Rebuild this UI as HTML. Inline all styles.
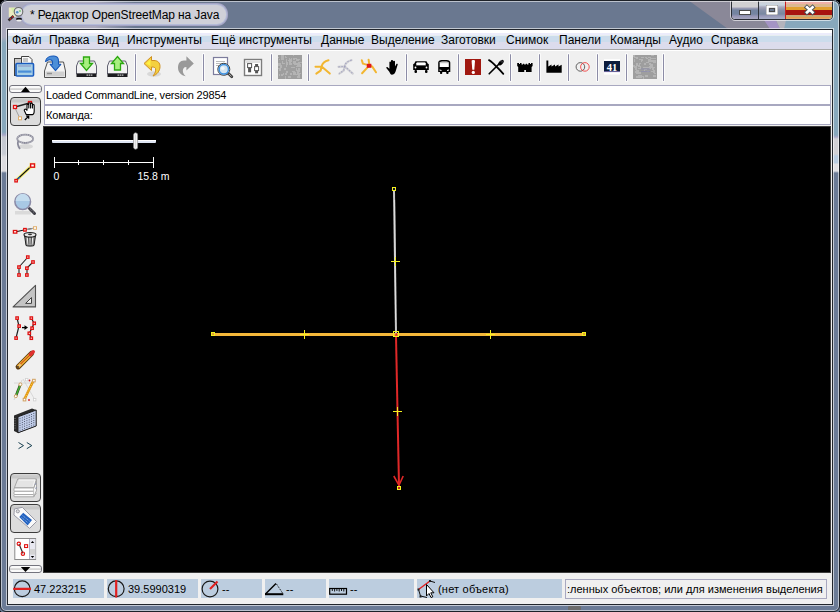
<!DOCTYPE html>
<html><head><meta charset="utf-8">
<style>
*{box-sizing:border-box}
html,body{margin:0;padding:0;width:840px;height:612px;overflow:hidden;background:#000}
body{position:relative;font-family:"Liberation Sans",sans-serif;font-size:12px;color:#000}
.a{position:absolute}
#win{left:0;top:0;width:840px;height:612px;border-radius:7px 7px 3px 3px;background:#6b7b96;overflow:hidden}
.t{position:absolute;white-space:pre;line-height:14px}
.sep{position:absolute;top:54px;width:2px;height:27px;background:#9a9ab0;border-right:1px solid #fff}
.menu span{position:absolute;top:33px;white-space:pre;line-height:14px}
</style></head><body>
<div id="win" class="a">
  <!-- title bar background -->
  <div class="a" style="left:0;top:0;width:840px;height:29px;background:linear-gradient(90deg,#aaaabd 0,#aaaabd 95px,#6a7890 135px,#6a7890 680px,#6a7890 100%)"></div>
  <!-- title streaks right -->
  <svg class="a" style="left:0;top:0" width="840" height="612">
    <polygon points="688,0 840,0 840,29 728,29" fill="#8a8898"/>
    <polygon points="764,20 776,20 780,29 770,29" fill="#a494c4"/>
    <polygon points="776,20 786,20 786,29 780,29" fill="#b4b4bc"/>
    <polygon points="786,20 840,20 840,29 784,29" fill="#88a8bc"/>
    <polygon points="820,0 840,0 840,29 820,29" fill="#88a8bc"/>
  </svg>
  <!-- left frame -->
  <div class="a" style="left:0;top:29px;width:8px;height:583px;background:linear-gradient(180deg,#aaaabd 0,#aaaabd 8px,#88a8bc 14px,#88a8bc 103px,#a8a8c8 106px,#c4c8d0 108px,#c8ccd4 125px,#dcdce0 128px,#dcdce0 142px,#6b7b96 144px,#6b7b96 100%)"></div>
  <!-- right frame -->
  <div class="a" style="left:832px;top:19px;width:8px;height:593px;background:linear-gradient(180deg,#88a8bc 0,#88a8bc 116px,#a8a8c8 118px,#d0d0d4 120px,#d0d0d4 135px,#b8cce0 137px,#b8cce0 144px,#e0e0e4 145px,#e0e0e4 152px,#6b7b96 154px,#6b7b96 100%)"></div>
  <!-- title glow -->
  <div class="a" style="left:22px;top:5px;width:204px;height:19px;border-radius:9px;background:#cfd0d8;box-shadow:0 0 0 1px #b4bcd8,0 0 0 2px #a4a4c4"></div>
  <div class="t" style="left:30px;top:8px;font-size:12px;color:#000;letter-spacing:-0.12px">* Редактор OpenStreetMap на Java</div>

  <!-- title icon -->
  <svg class="a" style="left:4px;top:4px" width="24" height="24">
    <rect x="4.8" y="3.5" width="7" height="9.5" fill="#ecebc0"/>
    <path d="M7 4 L11 4 L9 9 Z" fill="#d0f0a0" opacity=".8"/>
    <circle cx="14.5" cy="7.8" r="4.3" fill="#e0e4e4" stroke="#6a6a6a" stroke-width="1.1"/>
    <circle cx="13.2" cy="8.2" r="1.3" fill="#5090c8"/><circle cx="16" cy="7" r="1" fill="#80d080"/>
    <path d="M4.5 16.5 L9.5 12" stroke="#303030" stroke-width="2.4"/>
    <circle cx="6.5" cy="14.8" r=".9" fill="#d02020"/><circle cx="8.6" cy="12.8" r=".9" fill="#d02020"/>
    <ellipse cx="15" cy="15" rx="3" ry="1.2" fill="#101010"/>
    <ellipse cx="15" cy="16.6" rx="2.6" ry="1" fill="#f0f0f0"/>
  </svg>
  <!-- caption buttons -->
  <div class="a" style="left:730px;top:-2px;width:104px;height:23px;border:1px solid rgba(255,255,255,.6);border-radius:0 0 5px 5px"></div>
  <div class="a" style="left:731px;top:-1px;width:102px;height:21px;border:1px solid #2a2e36;border-radius:0 0 4px 4px;overflow:hidden;background:#fff">
    <div class="a" style="left:0;top:1px;width:26px;height:18px;border-radius:0 0 0 3px;background:linear-gradient(180deg,#d0d0d2 0,#d0d0d2 6px,#a0a0b8 7px,#7484a0 9px,#7484a0 13px,#9494b4 15px,#a8a8c0 100%)"></div>
    <div class="a" style="left:26px;top:0;width:1px;height:20px;background:#30343c"></div>
    <div class="a" style="left:27px;top:1px;width:26px;height:18px;background:linear-gradient(180deg,#d0d0d4 0,#c8d4e0 4px,#a8a8bc 6px,#8890a8 9px,#7888a0 13px,#9898b8 15px,#a8b0c8 100%)"></div>
    <div class="a" style="left:53px;top:0;width:1px;height:20px;background:#c82020"></div>
    <div class="a" style="left:54px;top:1px;width:46px;height:18px;border-radius:0 0 3px 0;background:linear-gradient(180deg,#f4e8e8 0,#f4e8e8 1px,#f0b0a8 1px,#f0b0a8 3px,#dcb890 3px,#dcb890 6px,#e2a030 6px,#e2a030 9px,#a81410 9px,#a81410 14px,#c8a878 14px,#c8a878 16px,#e0a040 16px,#e8a878 100%)"></div>
  </div>
  <svg class="a" style="left:730px;top:0" width="110" height="24">
    <rect x="9.5" y="10.5" width="11" height="4" fill="#fff" stroke="#4a4a4a"/>
    <rect x="36.5" y="5.5" width="11" height="9" fill="none" stroke="#4a4a4a"/>
    <rect x="37.5" y="6.5" width="9" height="7" fill="none" stroke="#fff" stroke-width="2.4"/>
    <rect x="39.5" y="8.5" width="5" height="3" fill="#6a7890" stroke="#4a4a4a"/>
    <path d="M77 7.3 L82.5 12.4 M82.5 7.3 L77 12.4" stroke="#4a5058" stroke-width="4.4" stroke-linecap="square"/>
    <path d="M77 7.3 L82.5 12.4 M82.5 7.3 L77 12.4" stroke="#fff" stroke-width="2.6" stroke-linecap="square"/>
  </svg>
  <!-- outer borders -->
  <div class="a" style="left:0;top:0;width:840px;height:612px;border:1px solid #1e2228;border-radius:7px 7px 6px 6px;box-shadow:inset 0 0 0 1px rgba(255,255,255,.55)"></div>
  <!-- content border -->
  <div class="a" style="left:6px;top:28px;width:828px;height:578px;border:1px solid rgba(255,255,255,.6)"></div>
  <div class="a" style="left:7px;top:29px;width:826px;height:576px;border:1px solid #22262c;background:#f0f0f0"></div>
  <!-- menu bar -->
  <div class="a" style="left:8px;top:30px;width:824px;height:21px;background:linear-gradient(180deg,#fff 0,#fff 3px,#ececfb 3px,#ececfb 5px,#e6eef0 5px,#e6eef0 6px,#ccdcec 6px,#ccdcec 12px,#dcdcec 12px,#dcdcec 19px,#a8a8a8 19px,#a8a8a8 20px,#fff 20px)"></div>
  <div class="menu">
    <span style="left:12px">Файл</span>
    <span style="left:49px">Правка</span>
    <span style="left:97px">Вид</span>
    <span style="left:127px">Инструменты</span>
    <span style="left:211px">Ещё инструменты</span>
    <span style="left:321px">Данные</span>
    <span style="left:371px">Выделение</span>
    <span style="left:441px">Заготовки</span>
    <span style="left:506px">Снимок</span>
    <span style="left:559px">Панели</span>
    <span style="left:610px">Команды</span>
    <span style="left:669px">Аудио</span>
    <span style="left:711px">Справка</span>
  </div>

  <!-- toolbar separators -->
  <div class="a" style="left:135px;top:54px;width:1px;height:27px;background:#8c8ca6;border-radius:1px;box-shadow:0 0 0 1px rgba(255,255,255,.7)"></div><div class="a" style="left:203px;top:54px;width:1px;height:27px;background:#8c8ca6;border-radius:1px;box-shadow:0 0 0 1px rgba(255,255,255,.7)"></div><div class="a" style="left:271px;top:54px;width:1px;height:27px;background:#8c8ca6;border-radius:1px;box-shadow:0 0 0 1px rgba(255,255,255,.7)"></div><div class="a" style="left:308px;top:54px;width:1px;height:27px;background:#8c8ca6;border-radius:1px;box-shadow:0 0 0 1px rgba(255,255,255,.7)"></div><div class="a" style="left:406px;top:54px;width:1px;height:27px;background:#8c8ca6;border-radius:1px;box-shadow:0 0 0 1px rgba(255,255,255,.7)"></div><div class="a" style="left:458px;top:54px;width:1px;height:27px;background:#8c8ca6;border-radius:1px;box-shadow:0 0 0 1px rgba(255,255,255,.7)"></div><div class="a" style="left:510px;top:54px;width:1px;height:27px;background:#8c8ca6;border-radius:1px;box-shadow:0 0 0 1px rgba(255,255,255,.7)"></div><div class="a" style="left:539px;top:54px;width:1px;height:27px;background:#8c8ca6;border-radius:1px;box-shadow:0 0 0 1px rgba(255,255,255,.7)"></div><div class="a" style="left:568px;top:54px;width:1px;height:27px;background:#8c8ca6;border-radius:1px;box-shadow:0 0 0 1px rgba(255,255,255,.7)"></div><div class="a" style="left:597px;top:54px;width:1px;height:27px;background:#8c8ca6;border-radius:1px;box-shadow:0 0 0 1px rgba(255,255,255,.7)"></div><div class="a" style="left:626px;top:54px;width:1px;height:27px;background:#8c8ca6;border-radius:1px;box-shadow:0 0 0 1px rgba(255,255,255,.7)"></div><div class="a" style="left:663px;top:54px;width:1px;height:27px;background:#8c8ca6;border-radius:1px;box-shadow:0 0 0 1px rgba(255,255,255,.7)"></div>
  <svg class="a" style="left:0;top:0" width="840" height="90">
    <!-- open -->
    <rect x="14.5" y="58.5" width="8" height="17" fill="#c8c8c8" stroke="#404040"/>
    <path d="M21.5 56.5 H29 L32 59.5 V64 H21.5 Z" fill="#fafafa" stroke="#404040"/>
    <path d="M23 59h5M23 61h5" stroke="#909090"/>
    <rect x="16" y="63.5" width="17.5" height="12.5" rx="1" fill="#a8d0e6" stroke="#1a5cc0" stroke-width="1.6"/>
    <rect x="18" y="70.5" width="13.5" height="2.2" fill="#4a8ed8"/>
    <path d="M18 66h13" stroke="#8080b8" stroke-width=".8"/>
    <!-- download from location -->
    <path d="M47.5 62 H63.5 L65.5 71 V77.5 H44.5 V71 Z" fill="#f4f4f4" stroke="#505050"/>
    <rect x="45.5" y="71.5" width="19" height="5" fill="#d0d0d0"/>
    <path d="M47 73.5h5" stroke="#909090" stroke-width="1.5"/>
    <path d="M45.5 61.5 C46 57.5 50 55.8 54 56 C57 56.2 58.5 58.5 58.5 61 V64.3 H60.8 L55.5 70.6 L50.2 64.3 H52.5 V62 C52.5 60.5 51 59.5 49.5 59.8 C48 60.1 46.8 61 45.5 61.5 Z" fill="#4c8ed8" stroke="#1858b8" stroke-width="1.1" stroke-linejoin="round"/>
    <!-- download green -->
    <path d="M78.5 61 H94.5 L96.5 66 V74 H76.5 V66 Z" fill="#f2f2f2" stroke="#606070"/>
    <rect x="76.5" y="73.5" width="20" height="3.5" fill="#1c1c20"/>
    <path d="M86.5 75.2h6.5" stroke="#c0c0c0" stroke-width="1.2" stroke-dasharray="1.5 .6"/>
    <path d="M83.5 57 H89.5 V63.5 H92.5 L86.5 70.5 L80.5 63.5 H83.5 Z" fill="#a8f080" stroke="#2ca810" stroke-width="1.3"/>
    <!-- upload green -->
    <path d="M109.5 61 H125.5 L127.5 66 V74 H107.5 V66 Z" fill="#f2f2f2" stroke="#606070"/>
    <rect x="107.5" y="73.5" width="20" height="3.5" fill="#1c1c20"/>
    <path d="M117.5 75.2h6.5" stroke="#c0c0c0" stroke-width="1.2" stroke-dasharray="1.5 .6"/>
    <path d="M114.5 70 H120.5 V63.5 H123.5 L117.5 56.5 L111.5 63.5 H114.5 Z" fill="#a8f080" stroke="#2ca810" stroke-width="1.3"/>
    <!-- undo -->
    <ellipse cx="154" cy="74" rx="7" ry="2.8" fill="#d8d8d8"/>
    <path d="M144 63.5 L151.5 56.5 V60.5 H154 C158 60.5 160 63 160 66.5 C160 71 157 74.5 153 76 C155.5 73 156 70.5 155.5 68.5 C155 67.5 154 67 152 67 H151.5 V70.6 Z" fill="#f4d040" stroke="#d09020" stroke-width="1"/>
    <path d="M146 63.5 L150.5 59.5 V66 Z" fill="#fff040"/>
    <!-- redo -->
    <path d="M193.8 63.5 L186.4 56.2 V60.5 H184 C180 60.5 178 63.5 178 67.5 C178 72 181 75.5 185.7 76.3 C183 74 182.5 71.5 183 69.5 C183.5 67.8 184.5 67 186 67 H186.4 V70.6 Z" fill="#999"/>
    <!-- zoom to -->
    <rect x="213.5" y="57.5" width="14" height="17" fill="#fff" stroke="#7c7c9c" stroke-width="1.2"/>
    <path d="M216 61.5h9M216 63.5h9M216 65.5h4" stroke="#a8a8a8" stroke-width=".8"/>
    <path d="M228.5 73.5 L231.8 76.8" stroke="#404040" stroke-width="2.8" stroke-linecap="round"/><path d="M229 74 L231.5 76.5" stroke="#c0c0c0" stroke-width=".8"/>
    <circle cx="223.8" cy="69.3" r="6" fill="#d4e4f0" stroke="#404040" stroke-width="1"/>
    <circle cx="223.8" cy="69.3" r="4.7" fill="none" stroke="#3c90e0" stroke-width="1.5"/><circle cx="222.8" cy="68.3" r="1.8" fill="#f0f6fa"/>
    <!-- toggle switches -->
    <rect x="244.5" y="59.5" width="17" height="16" fill="#fff" stroke="#7c7c7c" stroke-width="1.4"/>
    <rect x="246" y="61" width="14" height="2" fill="#e0e0e0"/>
    <rect x="247.6" y="63.6" width="4" height="4" fill="#fff" stroke="#555" stroke-width="1"/>
    <rect x="248.1" y="68" width="3" height="4.3" fill="#555"/>
    <rect x="255.1" y="64" width="3" height="2.5" fill="#555"/>
    <rect x="254.6" y="66.6" width="4" height="4" fill="#fff" stroke="#555" stroke-width="1"/>
    <rect x="255.1" y="71" width="3" height="2.3" fill="#555"/>
    <!-- noise 1 -->
    <rect x="278" y="55" width="24" height="24" fill="#9e9e9e"/><rect x="285" y="73" width="2" height="2" fill="#b4b4b4"/><rect x="297" y="70" width="1" height="1" fill="#b4b4b4"/><rect x="293" y="63" width="2" height="1" fill="#b4b4b4"/><rect x="293" y="72" width="3" height="3" fill="#b4b4b4"/><rect x="298" y="59" width="2" height="1" fill="#b4b4b4"/><rect x="294" y="67" width="1" height="1" fill="#b4b4b4"/><rect x="283" y="73" width="1" height="2" fill="#b4b4b4"/><rect x="278" y="63" width="3" height="3" fill="#b4b4b4"/><rect x="291" y="67" width="3" height="1" fill="#b4b4b4"/><rect x="289" y="58" width="1" height="1" fill="#b4b4b4"/><rect x="293" y="61" width="2" height="3" fill="#b4b4b4"/><rect x="298" y="64" width="3" height="3" fill="#b4b4b4"/><rect x="296" y="66" width="3" height="1" fill="#b4b4b4"/><rect x="288" y="76" width="1" height="2" fill="#b4b4b4"/><rect x="297" y="76" width="2" height="2" fill="#b4b4b4"/><rect x="295" y="73" width="1" height="1" fill="#b4b4b4"/><rect x="298" y="73" width="2" height="2" fill="#b4b4b4"/><rect x="281" y="57" width="3" height="3" fill="#b4b4b4"/><rect x="280" y="66" width="1" height="3" fill="#b4b4b4"/><rect x="282" y="55" width="2" height="3" fill="#b4b4b4"/><rect x="291" y="58" width="1" height="1" fill="#b4b4b4"/><rect x="290" y="73" width="2" height="2" fill="#b4b4b4"/><rect x="294" y="62" width="1" height="2" fill="#b4b4b4"/><rect x="278" y="57" width="1" height="1" fill="#b4b4b4"/><rect x="284" y="68" width="2" height="2" fill="#b4b4b4"/><rect x="282" y="56" width="2" height="2" fill="#b4b4b4"/><rect x="289" y="59" width="3" height="3" fill="#b4b4b4"/><rect x="292" y="71" width="3" height="1" fill="#b4b4b4"/><rect x="297" y="71" width="2" height="3" fill="#b4b4b4"/><rect x="298" y="62" width="2" height="3" fill="#b4b4b4"/><rect x="286" y="71" width="2" height="2" fill="#b4b4b4"/><rect x="278" y="68" width="2" height="1" fill="#b4b4b4"/><rect x="290" y="74" width="2" height="1" fill="#b4b4b4"/><rect x="298" y="75" width="2" height="3" fill="#b4b4b4"/><rect x="289" y="76" width="2" height="2" fill="#b4b4b4"/><rect x="293" y="55" width="1" height="1" fill="#b4b4b4"/><rect x="289" y="63" width="3" height="2" fill="#b4b4b4"/><rect x="296" y="74" width="2" height="1" fill="#b4b4b4"/><rect x="289" y="60" width="2" height="2" fill="#b4b4b4"/><rect x="297" y="63" width="2" height="3" fill="#b4b4b4"/><rect x="281" y="55" width="2" height="2" fill="#b4b4b4"/><rect x="294" y="62" width="2" height="1" fill="#b4b4b4"/><rect x="288" y="60" width="3" height="1" fill="#b4b4b4"/><rect x="281" y="74" width="2" height="2" fill="#b4b4b4"/><rect x="299" y="62" width="3" height="1" fill="#b4b4b4"/><rect x="280" y="65" width="2" height="3" fill="#b4b4b4"/><rect x="286" y="62" width="1" height="1" fill="#b4b4b4"/><rect x="294" y="61" width="2" height="1" fill="#b4b4b4"/><rect x="286" y="65" width="1" height="2" fill="#b4b4b4"/><rect x="296" y="59" width="3" height="2" fill="#b4b4b4"/><rect x="294" y="63" width="3" height="2" fill="#b4b4b4"/><rect x="298" y="68" width="2" height="3" fill="#b4b4b4"/><rect x="296" y="68" width="1" height="3" fill="#b4b4b4"/><rect x="282" y="61" width="1" height="3" fill="#b4b4b4"/><rect x="297" y="71" width="3" height="1" fill="#b4b4b4"/><rect x="279" y="69" width="2" height="2" fill="#b4b4b4"/><rect x="285" y="57" width="2" height="1" fill="#b4b4b4"/><rect x="285" y="56" width="1" height="1" fill="#b4b4b4"/><rect x="291" y="73" width="1" height="1" fill="#b4b4b4"/><rect x="293" y="58" width="2" height="2" fill="#b4b4b4"/><rect x="285" y="76" width="1" height="3" fill="#b4b4b4"/><rect x="279" y="74" width="1" height="2" fill="#b4b4b4"/><rect x="282" y="63" width="3" height="1" fill="#b4b4b4"/><rect x="289" y="62" width="2" height="1" fill="#b4b4b4"/><rect x="295" y="58" width="2" height="1" fill="#b4b4b4"/><rect x="286" y="59" width="1" height="3" fill="#b4b4b4"/><rect x="298" y="73" width="3" height="1" fill="#b4b4b4"/><rect x="286" y="62" width="2" height="3" fill="#b4b4b4"/><rect x="279" y="70" width="2" height="1" fill="#b4b4b4"/><rect x="279" y="59" width="1" height="1" fill="#b4b4b4"/>
    <!-- split way icons -->
    <g fill="none" stroke="#f2b630" stroke-width="2" stroke-linecap="round" stroke-linejoin="round">
      <path d="M328.5 60.2 C325 61 322.5 62.5 321.6 66.4 M315.5 66.8 L321.6 66.4 M321.6 66.4 L320.6 70.7 L316.3 73.6 M321.6 66.4 L329.8 73.6"/>
    </g>
    <g fill="none" stroke="#cfcfd4" stroke-width="2.2" stroke-linecap="round" stroke-linejoin="round">
      <path d="M351.5 60.2 C348 61 345.5 62.5 344.6 66.4 M338.5 66.8 L344.6 66.4 M344.6 66.4 L343.6 70.7 L339.3 73.6 M344.6 66.4 L352.8 73.6"/>
    </g>
    <g fill="none" stroke="#9898bc" stroke-width="1.2" stroke-dasharray="1.2 1.8" opacity=".8">
      <path d="M351.5 60.2 C348 61 345.5 62.5 344.6 66.4 M338.5 66.8 L344.6 66.4 M344.6 66.4 L343.6 70.7 L339.3 73.6 M344.6 66.4 L352.8 73.6"/>
    </g>
    <g fill="none" stroke="#f2b630" stroke-width="2" stroke-linecap="round" stroke-linejoin="round">
      <path d="M361.8 60.2 L362.9 63.6 L366.4 64.6 L369.4 65.4 M368.6 59.7 L369.4 65.4 M369.4 65.4 L362.1 73.3 M369.4 65.4 L372.1 66.4 L376 72.3"/>
    </g>
    <rect x="366.8" y="63.8" width="4.6" height="4" fill="#e01818"/>
    <!-- hand -->
    <path d="M389.3 71.8 L386.5 68.2 C386 67.4 386.8 66.8 387.6 67.3 L389.4 68.8 V62.3 C389.4 61.3 391 61.3 391 62.3 V66 V60.8 C391 59.7 393 59.7 393 60.8 V66 V61.5 C393 60.6 395 60.6 395 61.5 V66.5 L396.3 64.2 C396.7 63.4 398 63.8 397.7 64.6 L396.2 69.5 C395.5 72.5 394.5 74.7 392 74.7 C390.5 74.7 390 73.3 389.3 71.8 Z" fill="#000"/>
    <!-- car -->
    <path d="M415.5 61.2 H426.5 L428.8 65.6 V70 H413.2 V65.6 Z" fill="#000"/>
    <path d="M417 62.6 H425 L426.2 65.3 H415.8 Z" fill="#fff"/>
    <rect x="413.3" y="63.9" width="15.4" height="1.4" fill="#000"/>
    <rect x="416.3" y="62.8" width="9.4" height="2.4" fill="#fff"/>
    <circle cx="415.5" cy="67.5" r=".9" fill="#fff"/><circle cx="426.5" cy="67.5" r=".9" fill="#fff"/>
    <rect x="414.5" y="70" width="2.5" height="3" rx="1" fill="#000"/><rect x="425" y="70" width="2.5" height="3" rx="1" fill="#000"/>
    <!-- bus -->
    <path d="M438.2 63 C438.2 60.5 440 60.1 444.2 60.1 C448.5 60.1 450.3 60.5 450.3 63 V72 H438.2 Z" fill="#000"/>
    <path d="M439.7 62.6 C440 61.8 441 61.6 444.2 61.6 C447.4 61.6 448.5 61.8 448.8 62.6 V67 H439.7 Z" fill="#fff"/>
    <path d="M439.5 62.7 H449" stroke="#888" stroke-width=".6"/>
    <path d="M439.5 69.5 L441.5 70 V71 L439.5 70.6Z M449 69.5 L447 70 V71 L449 70.6Z" fill="#fff"/>
    <rect x="440" y="71.5" width="2.2" height="2.5" rx=".8" fill="#000"/><rect x="446.3" y="71.5" width="2.2" height="2.5" rx=".8" fill="#000"/>
    <!-- red ! -->
    <rect x="465" y="59" width="16" height="16" fill="#a01810"/>
    <path d="M471.6 61 C471.6 59.6 475 59.6 475 61 L474.3 69.8 H472.3 Z" fill="#fff"/>
    <circle cx="473.3" cy="72.4" r="1.6" fill="#fff"/>
    <!-- knife & fork -->
    <path d="M489 60.2 C490.5 60.8 496 66 503.3 73.8" stroke="#000" stroke-width="1.8" fill="none" stroke-linecap="round"/>
    <path d="M489.2 73.8 L499.5 63.5" stroke="#000" stroke-width="1.6" stroke-linecap="round"/>
    <ellipse cx="501" cy="62.6" rx="1.9" ry="3.4" transform="rotate(45 501 62.6)" fill="#000"/><path d="M500.5 61 L502.3 62.8 M501.4 60.2 L503.1 61.9" stroke="#9090a0" stroke-width=".5"/>
    <!-- castle -->
    <path d="M517.2 63 H519 V64 H520 V63 H521.5 V64.5 H523 V63.8 H524.2 V64.5 H525.8 V63.8 H527 V64.5 H528.5 V63 H530 V64 H531 V63 H532.6 V66 L531.6 67 V72 H518.2 V67 L517.2 66 Z" fill="#000"/>
    <rect x="524.3" y="70" width="1.6" height="2" fill="#fff"/>
    <!-- factory -->
    <path d="M546.4 60.5 H548.3 V66.5 L551.5 64.5 V66.5 L555 64.5 V66.5 L558.5 64.5 V66.5 L561.7 64.8 V72.8 H546.4 Z" fill="#000"/>
    <!-- circles -->
    <circle cx="580.4" cy="66.9" r="4.3" fill="none" stroke="#505050" stroke-width=".9"/>
    <circle cx="584.9" cy="66.9" r="4.3" fill="none" stroke="#f04040" stroke-width=".9"/>
    <!-- 41 -->
    <rect x="604" y="59.2" width="16" height="15.4" fill="#fff"/>
    <rect x="604" y="61" width="16" height="11" fill="#0c1c3c"/>
    <rect x="604" y="71.3" width="16" height=".8" fill="#9080c0"/>
    <text x="612" y="70.6" text-anchor="middle" font-family="Liberation Serif" font-weight="bold" font-size="10.5" fill="#fff">41</text>
    <!-- noise 2 -->
    <rect x="633" y="55" width="24" height="24" fill="#9e9e9e"/><rect x="634" y="57" width="3" height="1" fill="#b4b4b4"/><rect x="635" y="71" width="3" height="2" fill="#b4b4b4"/><rect x="638" y="65" width="1" height="2" fill="#b4b4b4"/><rect x="645" y="75" width="3" height="2" fill="#b4b4b4"/><rect x="644" y="63" width="2" height="2" fill="#b4b4b4"/><rect x="646" y="58" width="2" height="1" fill="#b4b4b4"/><rect x="645" y="57" width="2" height="1" fill="#b4b4b4"/><rect x="644" y="69" width="3" height="1" fill="#b4b4b4"/><rect x="652" y="68" width="1" height="2" fill="#b4b4b4"/><rect x="653" y="70" width="2" height="3" fill="#b4b4b4"/><rect x="646" y="69" width="1" height="1" fill="#b4b4b4"/><rect x="639" y="72" width="2" height="1" fill="#b4b4b4"/><rect x="646" y="62" width="3" height="1" fill="#b4b4b4"/><rect x="633" y="65" width="2" height="2" fill="#b4b4b4"/><rect x="636" y="69" width="1" height="3" fill="#b4b4b4"/><rect x="654" y="58" width="2" height="1" fill="#b4b4b4"/><rect x="651" y="55" width="3" height="1" fill="#b4b4b4"/><rect x="640" y="67" width="1" height="1" fill="#b4b4b4"/><rect x="651" y="58" width="3" height="1" fill="#b4b4b4"/><rect x="633" y="65" width="1" height="1" fill="#b4b4b4"/><rect x="636" y="76" width="3" height="2" fill="#b4b4b4"/><rect x="651" y="64" width="1" height="1" fill="#b4b4b4"/><rect x="651" y="71" width="2" height="1" fill="#b4b4b4"/><rect x="650" y="58" width="1" height="2" fill="#b4b4b4"/><rect x="651" y="60" width="1" height="1" fill="#b4b4b4"/><rect x="638" y="75" width="2" height="3" fill="#b4b4b4"/><rect x="652" y="67" width="2" height="2" fill="#b4b4b4"/><rect x="652" y="67" width="2" height="3" fill="#b4b4b4"/><rect x="635" y="67" width="2" height="3" fill="#b4b4b4"/><rect x="638" y="68" width="3" height="1" fill="#b4b4b4"/><rect x="653" y="67" width="2" height="1" fill="#b4b4b4"/><rect x="636" y="70" width="3" height="3" fill="#b4b4b4"/><rect x="651" y="60" width="2" height="2" fill="#b4b4b4"/><rect x="639" y="59" width="2" height="1" fill="#b4b4b4"/><rect x="650" y="64" width="3" height="2" fill="#b4b4b4"/><rect x="639" y="64" width="1" height="2" fill="#b4b4b4"/><rect x="648" y="67" width="2" height="1" fill="#b4b4b4"/><rect x="651" y="66" width="2" height="2" fill="#b4b4b4"/><rect x="648" y="59" width="3" height="3" fill="#b4b4b4"/><rect x="652" y="61" width="3" height="1" fill="#b4b4b4"/><rect x="648" y="57" width="3" height="1" fill="#b4b4b4"/><rect x="647" y="62" width="2" height="1" fill="#b4b4b4"/><rect x="639" y="63" width="2" height="1" fill="#b4b4b4"/><rect x="641" y="59" width="2" height="1" fill="#b4b4b4"/><rect x="641" y="60" width="1" height="2" fill="#b4b4b4"/><rect x="638" y="68" width="1" height="1" fill="#b4b4b4"/><rect x="636" y="57" width="2" height="2" fill="#b4b4b4"/><rect x="634" y="66" width="3" height="2" fill="#b4b4b4"/><rect x="633" y="55" width="2" height="2" fill="#b4b4b4"/><rect x="646" y="67" width="3" height="1" fill="#b4b4b4"/><rect x="639" y="75" width="3" height="3" fill="#b4b4b4"/><rect x="637" y="72" width="2" height="1" fill="#b4b4b4"/><rect x="641" y="57" width="3" height="1" fill="#b4b4b4"/><rect x="647" y="71" width="2" height="1" fill="#b4b4b4"/><rect x="649" y="66" width="2" height="3" fill="#b4b4b4"/><rect x="642" y="76" width="2" height="1" fill="#b4b4b4"/><rect x="643" y="76" width="1" height="3" fill="#b4b4b4"/><rect x="649" y="66" width="1" height="2" fill="#b4b4b4"/><rect x="654" y="73" width="2" height="1" fill="#b4b4b4"/><rect x="638" y="66" width="3" height="1" fill="#b4b4b4"/><rect x="636" y="72" width="2" height="2" fill="#b4b4b4"/><rect x="653" y="75" width="3" height="2" fill="#b4b4b4"/><rect x="653" y="60" width="3" height="3" fill="#b4b4b4"/><rect x="642" y="60" width="1" height="1" fill="#b4b4b4"/><rect x="638" y="72" width="3" height="2" fill="#b4b4b4"/><rect x="636" y="63" width="2" height="3" fill="#b4b4b4"/><rect x="634" y="59" width="1" height="3" fill="#b4b4b4"/><rect x="649" y="63" width="2" height="2" fill="#b4b4b4"/><rect x="643" y="67" width="3" height="1" fill="#b4b4b4"/><rect x="644" y="70" width="1" height="1" fill="#b4b4b4"/>
    <path d="M641 71.5h9M641 69h9" stroke="#8c8cb0" stroke-width="1" opacity=".7"/>
  </svg>

  <!-- left toolbar -->
  <div class="a" style="left:9px;top:85px;width:33px;height:8px;border:1px solid #74747e;border-radius:3px;background:linear-gradient(180deg,#fafafa 0,#fafafa 30%,#d4d4d4 45%,#d4d4d4 60%,#fafafa 75%)"></div>
  <div class="a" style="left:10px;top:97px;width:31px;height:29px;border:1.5px solid #3c3c3c;border-radius:4px;background:linear-gradient(180deg,#dadada 0,#c8c8c8 2px,#c8c8c8 4px,#dcdcdc 5px,#dcdcdc 100%)"></div>
  <div class="a" style="left:10px;top:473px;width:31px;height:29px;border:1.5px solid #3c3c3c;border-radius:4px;background:linear-gradient(180deg,#dadada 0,#c8c8c8 2px,#c8c8c8 4px,#dcdcdc 5px,#dcdcdc 100%)"></div>
  <div class="a" style="left:10px;top:504px;width:31px;height:29px;border:1.5px solid #3c3c3c;border-radius:4px;background:linear-gradient(180deg,#dadada 0,#c8c8c8 2px,#c8c8c8 4px,#dcdcdc 5px,#dcdcdc 100%)"></div>
  <div class="a" style="left:9px;top:565px;width:33px;height:8px;border:1px solid #74747e;border-radius:3px;background:linear-gradient(180deg,#fafafa 0,#fafafa 30%,#d4d4d4 45%,#d4d4d4 60%,#fafafa 75%)"></div>
  <svg class="a" style="left:0;top:80px" width="44" height="500" viewBox="0 80 44 500">
    <path d="M21 92 L25.5 86.8 L30 92 Z" fill="#000"/>
    <path d="M20.8 567 H30.3 L25.5 572 Z" fill="#000"/>
    <!-- select -->
    <path d="M15 107 L29.5 103" stroke="#202020" stroke-width="1.3"/>
    <path d="M15 108 L19.8 118" stroke="#909090" stroke-width=".8"/>
    <rect x="13.5" y="105.5" width="3" height="3" fill="#fff" stroke="#e01010" stroke-width="1.3"/>
    <rect x="28.5" y="101.5" width="3" height="2.6" fill="#fff" stroke="#e01010" stroke-width="1.3"/>
    <rect x="18.5" y="116.8" width="3" height="3" fill="#fff" stroke="#e0b070" stroke-width="1"/>
    <path d="M26.2 114.6 L24.3 110.6 C24 109.6 25 108.7 26 109.4 L27 110.2 V105 a0.9 0.9 0 0 1 1.8 0 V108 V103.6 a0.9 0.9 0 0 1 1.8 0 V108 V104 a0.9 0.9 0 0 1 1.8 0 V108 V105.4 a0.9 0.9 0 0 1 1.8 0 V111 C34.2 113 33.6 114.6 32.5 114.6 Z" fill="#fff" stroke="#000" stroke-width="1.1" stroke-linejoin="round"/>
    <path d="M24.8 120 L28.5 116.3 M26.2 116.2 H28.7 V118.7" stroke="#000" stroke-width="1.2" fill="none"/>
    <!-- lasso -->
    <ellipse cx="26" cy="146.5" rx="7" ry="2.5" fill="#d8d8d8"/>
    <ellipse cx="25.2" cy="138.8" rx="8" ry="4.2" fill="none" stroke="#8a8a9a" stroke-width="1.8"/>
    <ellipse cx="25.2" cy="138.8" rx="8" ry="4.2" fill="none" stroke="#e8e8e8" stroke-width=".7" stroke-dasharray="1 1.2"/>
    <path d="M18.5 141 C17 143 18 146 20 149" stroke="#8a8a9a" stroke-width="1.8" fill="none"/>
    <!-- draw -->
    <path d="M16.5 180 L31.5 166" stroke="#f8f070" stroke-width="3.2"/>
    <path d="M16.5 180 L31.5 166" stroke="#101010" stroke-width="1.2"/>
    <path d="M16.5 180 L20 177" stroke="#2060c0" stroke-width="1.2"/>
    <rect x="29.3" y="162.6" width="6.4" height="5.8" fill="#f8f8a0" opacity=".7"/>
    <rect x="30.6" y="163.9" width="3.9" height="3.3" fill="#fff" stroke="#e01010" stroke-width="1.4"/>
    <rect x="14.9" y="179.5" width="2.4" height="2.4" fill="#fff" stroke="#e01010" stroke-width="1.3"/>
    <!-- zoom -->
    <rect x="15" y="211" width="16" height="3.5" fill="#dadada"/>
    <path d="M29.5 208.5 L34.5 213.5" stroke="#404048" stroke-width="3" stroke-linecap="round"/><path d="M30.2 208.8 L34 212.6" stroke="#a0a0a8" stroke-width=".8" stroke-dasharray="1 1"/>
    <circle cx="22.7" cy="201.7" r="7.8" fill="#a8c8e4" stroke="#8c8ca8" stroke-width="1.6"/>
    <path d="M15.5 201 A7.2 7.2 0 0 1 29.9 201 Z" fill="#c4dcee"/>
    <!-- delete -->
    <path d="M15 232 L25 229.8 L35 228" stroke="#202020" stroke-width="1.1"/>
    <path d="M26 229.8 L35 228" stroke="#a0a0a0" stroke-width="1"/>
    <rect x="13.4" y="230.5" width="3.4000000000000004" height="2.6" fill="#fff" stroke="#e01010" stroke-width="1.3"/>
    <rect x="23.7" y="228.5" width="2.5" height="2.6" fill="#fff" stroke="#e01010" stroke-width="1.3"/>
    <rect x="33.5" y="226.7" width="3" height="2.6" fill="#fff" stroke="#e0b070" stroke-width="1"/>
    <path d="M24.5 235 L26 245.5 C27 246.3 33 246.3 34 245.5 L35.6 235 Z" fill="#8a8a8a" stroke="#202020" stroke-width="1"/>
    <path d="M27.2 237 L28 244.5 M30 237 V244.8 M32.8 237 L32 244.5" stroke="#f4f4f4" stroke-width="1"/><path d="M28.6 237 L29 244.5 M31.4 237 L31 244.5" stroke="#404040" stroke-width=".8"/>
    <ellipse cx="30" cy="234.8" rx="6" ry="2.3" fill="#e8e8e8" stroke="#202020" stroke-width="1.1"/>
    <ellipse cx="30" cy="234.3" rx="2" ry=".9" fill="#303030"/>
    <!-- parallel -->
    <path d="M19 267 L28 257 M33 262 L27 268" stroke="#202020" stroke-width="1.1"/>
    <path d="M19 268 V274 M27 269 V274" stroke="#707070" stroke-width="1.8"/>
    <rect x="26.6" y="255.9" width="2.4" height="2.4" fill="#fff" stroke="#e01010" stroke-width="1.3"/><rect x="17.8" y="265.9" width="2.4" height="2.4" fill="#fff" stroke="#e01010" stroke-width="1.3"/><rect x="17.8" y="273.8" width="2.4" height="2.4" fill="#fff" stroke="#e01010" stroke-width="1.3"/><rect x="31.8" y="260.8" width="2.4" height="2.4" fill="#fff" stroke="#e01010" stroke-width="1.3"/><rect x="25.7" y="267.0" width="2.4" height="2.4" fill="#fff" stroke="#e01010" stroke-width="1.3"/><rect x="25.7" y="273.8" width="2.4" height="2.4" fill="#fff" stroke="#e01010" stroke-width="1.3"/>
    <!-- set square -->
    <path d="M13.1 306.9 L35.5 285.3 V306.9 Z" fill="#c4c4c4" stroke="#505050" stroke-width="1.1" stroke-linejoin="round"/>
    <path d="M25.6 303.4 L31.5 297.5 V303.4 Z" fill="#f0f0f0" stroke="#404040" stroke-width="1"/>
    <!-- improve way -->
    <path d="M17 318 L19 326 L16 338" stroke="#202020" stroke-width="1.2" fill="none"/>
    <path d="M31.3 318 L34 323.3 L32 328 L29.3 333.3 L31.3 338" stroke="#202020" stroke-width="1.2" fill="none"/>
    <rect x="15.9" y="316.9" width="2.4" height="2.4" fill="#fff" stroke="#e01010" stroke-width="1.3"/><rect x="17.9" y="324.9" width="2.4" height="2.4" fill="#fff" stroke="#e01010" stroke-width="1.3"/><rect x="14.9" y="336.9" width="2.4" height="2.4" fill="#fff" stroke="#e01010" stroke-width="1.3"/>
    <rect x="30.1" y="316.9" width="2.4" height="2.4" fill="#fff" stroke="#e01010" stroke-width="1.3"/><rect x="33.0" y="322.1" width="2.4" height="2.4" fill="#fff" stroke="#e01010" stroke-width="1.3"/><rect x="30.9" y="327.0" width="2.4" height="2.4" fill="#fff" stroke="#e01010" stroke-width="1.3"/><rect x="28.1" y="332.1" width="2.4" height="2.4" fill="#fff" stroke="#e01010" stroke-width="1.3"/><rect x="30.1" y="337.0" width="2.4" height="2.4" fill="#fff" stroke="#e01010" stroke-width="1.3"/>
    <path d="M22 327.6 H25.5" stroke="#000" stroke-width="1.3"/>
    <path d="M24.5 325.3 L28 327.6 L24.5 330 Z" fill="#000"/>
    <!-- pencil -->
    <path d="M18.2 366.8 L31.5 353.5" stroke="#5a3a10" stroke-width="5.2" stroke-linecap="round"/>
    <path d="M18.2 366.8 L31.5 353.5" stroke="#f0b030" stroke-width="3.4"/>
    <path d="M19 365.5 L31 353.8" stroke="#c02010" stroke-width=".9"/>
    <path d="M30.5 354.5 L33.2 351.8" stroke="#e03030" stroke-width="3.6" stroke-linecap="round"/>
    <path d="M17.3 367.8 L19.8 363.5 L21.5 365.3 Z" fill="#e8c890"/>
    <path d="M17.3 367.8 L18.3 366 L19 366.8 Z" fill="#202020"/>
    <!-- cross way tool -->
    <path d="M14 400 L22 380 M23 379 L35 400 M14 383 L35 383" stroke="#d0d0d0" stroke-width=".8" fill="none"/>
    <path d="M15.8 396.2 L20.4 384.4" stroke="#304020" stroke-width="2.6"/>
    <path d="M15.8 396.2 L20.4 384.4" stroke="#40b030" stroke-width="1.5"/>
    <path d="M24.3 399.5 L33.5 380.5" stroke="#e09010" stroke-width="2.6"/>
    <path d="M24.3 399.5 L33.5 380.5" stroke="#f8d040" stroke-width="1.2" stroke-dasharray="1 1"/>
    <circle cx="15.8" cy="396.2" r="1.5" fill="#fff" stroke="#d0a060" stroke-width="1"/>
    <circle cx="20.4" cy="384.4" r="1.5" fill="#fff" stroke="#d0a060" stroke-width="1"/>
    <rect x="23.2" y="398.3" width="2.6" height="2.6" fill="#fff" stroke="#d0a060" stroke-width="1"/>
    <rect x="32.6" y="379.3" width="2.6" height="2.6" fill="#fff" stroke="#d0a060" stroke-width="1"/>
    <rect x="25.5" y="378.5" width="2.4" height="2.4" fill="#fff" stroke="#d0d0d0" stroke-width=".8"/>
    <rect x="33.5" y="398.5" width="2.4" height="2.4" fill="#fff" stroke="#d0d0d0" stroke-width=".8"/>
    <circle cx="29" cy="400" r=".9" fill="#d02020"/><circle cx="29.5" cy="380.5" r=".9" fill="#d02020"/>
    <!-- building -->
    <path d="M14 415.5 L32 408.6 L36.2 410 V426 L18 433 L14 431 Z" fill="#2a2a2a"/>
    <path d="M18 416.8 L36.2 410 V426 L18 432.8 Z" fill="#c0cce8" stroke="#1e1e1e" stroke-width="1"/>
    <g fill="#202838"><rect x="19.60" y="418.30" width=".8" height=".8"/><rect x="19.60" y="420.60" width=".8" height=".8"/><rect x="19.60" y="422.90" width=".8" height=".8"/><rect x="19.60" y="425.20" width=".8" height=".8"/><rect x="19.60" y="427.50" width=".8" height=".8"/><rect x="19.60" y="429.80" width=".8" height=".8"/><rect x="21.90" y="417.44" width=".8" height=".8"/><rect x="21.90" y="419.74" width=".8" height=".8"/><rect x="21.90" y="422.04" width=".8" height=".8"/><rect x="21.90" y="424.34" width=".8" height=".8"/><rect x="21.90" y="426.64" width=".8" height=".8"/><rect x="21.90" y="428.94" width=".8" height=".8"/><rect x="24.20" y="416.58" width=".8" height=".8"/><rect x="24.20" y="418.88" width=".8" height=".8"/><rect x="24.20" y="421.18" width=".8" height=".8"/><rect x="24.20" y="423.48" width=".8" height=".8"/><rect x="24.20" y="425.78" width=".8" height=".8"/><rect x="24.20" y="428.08" width=".8" height=".8"/><rect x="26.50" y="415.72" width=".8" height=".8"/><rect x="26.50" y="418.02" width=".8" height=".8"/><rect x="26.50" y="420.32" width=".8" height=".8"/><rect x="26.50" y="422.62" width=".8" height=".8"/><rect x="26.50" y="424.92" width=".8" height=".8"/><rect x="26.50" y="427.22" width=".8" height=".8"/><rect x="28.80" y="414.86" width=".8" height=".8"/><rect x="28.80" y="417.16" width=".8" height=".8"/><rect x="28.80" y="419.46" width=".8" height=".8"/><rect x="28.80" y="421.76" width=".8" height=".8"/><rect x="28.80" y="424.06" width=".8" height=".8"/><rect x="28.80" y="426.36" width=".8" height=".8"/><rect x="31.10" y="414.00" width=".8" height=".8"/><rect x="31.10" y="416.30" width=".8" height=".8"/><rect x="31.10" y="418.60" width=".8" height=".8"/><rect x="31.10" y="420.90" width=".8" height=".8"/><rect x="31.10" y="423.20" width=".8" height=".8"/><rect x="31.10" y="425.50" width=".8" height=".8"/><rect x="33.40" y="413.14" width=".8" height=".8"/><rect x="33.40" y="415.44" width=".8" height=".8"/><rect x="33.40" y="417.74" width=".8" height=".8"/><rect x="33.40" y="420.04" width=".8" height=".8"/><rect x="33.40" y="422.34" width=".8" height=".8"/><rect x="33.40" y="424.64" width=".8" height=".8"/></g>
    <path d="M15 418 V430" stroke="#a0a0a0" stroke-width=".8" stroke-dasharray="1 1.4"/>
    <!-- >> -->
    <path d="M18.5 442.5 L23.5 445.6 L18.5 448.7 M26.8 442.5 L31.8 445.6 L26.8 448.7" stroke="#184050" stroke-width="1" fill="none"/>
    <!-- layers -->
    <path d="M14.5 493.2 H33.8 L36.5 490.5 M14.5 496 H33.8 L36.5 493.3" fill="none" stroke="#a8a8a8" stroke-width=".9"/>
    <path d="M14.4 487.8 C13.8 489 13.8 490.5 14.4 491.3 H33.8 V487.8 Z" fill="#fff" stroke="#a0a0a0" stroke-width=".9"/>
    <path d="M14.4 491.3 C13.8 492.5 13.8 494 14.4 494.6 H33.8 V491.3 Z" fill="#fff" stroke="#a0a0a0" stroke-width=".9"/>
    <path d="M14.4 494.6 C13.8 495.3 13.8 496 14.4 496.8 H33.8 V494.6 Z" fill="#fff" stroke="#a0a0a0" stroke-width=".9"/>
    <path d="M33.8 487.8 L36.5 479 V490.5 L33.8 496.8" fill="#f4f4f4" stroke="#a0a0a0" stroke-width=".9"/>
    <path d="M17.8 478.9 H36.5 L33.8 487.7 H14.4 Z" fill="#e4e4e4" stroke="#a0a0a0" stroke-width=".9"/>
    <path d="M19 480 H35 L33 486.5" fill="none" stroke="#f8f8f8" stroke-width="1"/>
    <path d="M36 483 L35 485 M36.5 487 L35.5 489" stroke="#8890b0" stroke-width=".8"/>
    <!-- tag -->
    <path d="M14.4 509 L22.3 507.3 L36.5 521.5 L29.6 528.4 L13.9 515 Z" fill="#fafafa" stroke="#9a9aa6" stroke-width="1"/>
    <circle cx="17.8" cy="511.3" r="1.6" fill="#e0e0e0" stroke="#8a8a96" stroke-width=".8"/>
    <path d="M23.2 512.7 L32 520 L27.6 525.5 L19.3 517.1 Z" fill="#2262c0"/>
    <path d="M22.6 515.5 L29.5 521.2 M21.6 517.5 L28.2 523" stroke="#b8d0f0" stroke-width=".7" stroke-dasharray="1.2 .8"/>
    <!-- widget -->
    <rect x="14.8" y="538.5" width="20.8" height="21" fill="#fff" stroke="#8a8a8a" stroke-width="1"/>
    <rect x="29.5" y="539" width="6" height="20" fill="#e8e8f0"/>
    <path d="M29.5 539 V559" stroke="#a0a0b8" stroke-width=".8"/>
    <rect x="30" y="549" width="5" height="5.6" fill="#d4d4d4"/>
    <path d="M30.8 543 L32.5 541 L34.2 543 Z M30.8 556 L32.5 558 L34.2 556 Z" fill="#000"/>
    <path d="M19 544 L23 553.5" stroke="#303030" stroke-width="1.2"/>
    <circle cx="18.8" cy="543.8" r="1.7" fill="none" stroke="#e01010" stroke-width="1.1"/>
    <circle cx="22.9" cy="553.7" r="1.7" fill="none" stroke="#e01010" stroke-width="1.1"/>
    <rect x="24.6" y="544.7" width="3" height="2.8" fill="none" stroke="#e01010" stroke-width="1.1"/>
  </svg>
  <!-- command line boxes -->
  <div class="a" style="left:44px;top:85px;width:787px;height:20px;border:1px solid #a8a8c0;background:#fff"></div>
  <div class="a" style="left:44px;top:105px;width:787px;height:20px;border:1px solid #a8a8c0;background:#fff"></div>
  <div class="t" style="left:46px;top:88px;font-size:11px;letter-spacing:-0.19px">Loaded CommandLine, version 29854</div>
  <div class="t" style="left:46px;top:108px;font-size:11px;letter-spacing:-0.15px">Команда:</div>
  <!-- map -->
  <div class="a" style="left:43px;top:126px;width:788px;height:447px;background:#000;border:1px solid #3c3c3c"></div>
  <!-- status bar -->
  <div class="a" style="left:13px;top:579px;width:91px;height:19px;background:#bccddf"></div>
  <div class="a" style="left:107px;top:579px;width:91px;height:19px;background:#bccddf"></div>
  <div class="a" style="left:201px;top:579px;width:61px;height:19px;background:#bccddf"></div>
  <div class="a" style="left:265px;top:579px;width:61px;height:19px;background:#bccddf"></div>
  <div class="a" style="left:329px;top:579px;width:85px;height:19px;background:#bccddf"></div>
  <div class="a" style="left:417px;top:579px;width:145px;height:19px;background:#bccddf"></div>
  <div class="a" style="left:565px;top:579px;width:262px;height:20px;border:1px solid #a8a8c0;background:#f0f0f0"></div>
  <div class="t" style="left:34px;top:582px;font-size:11px">47.223215</div>
  <div class="t" style="left:128px;top:582px;font-size:11px">39.5990319</div>
  <div class="t" style="left:222px;top:582px;font-size:11px">--</div>
  <div class="t" style="left:286px;top:582px;font-size:11px">--</div>
  <div class="t" style="left:350px;top:582px;font-size:11px">--</div>
  <div class="t" style="left:438px;top:582px;font-size:11px;letter-spacing:0.2px">(нет объекта)</div>
  <div class="t" style="left:567px;top:582px;font-size:11px">:ленных объектов; или для изменения выделения</div>

  <div class="a" style="left:568px;top:606px;width:13px;height:4px;background:#6c6c6c;border-radius:1px 1px 0 0"></div>
  <!-- map overlay -->
  <svg class="a" style="left:0;top:0" width="840" height="612">
    <!-- zoom slider -->
    <rect x="52" y="140" width="104" height="3" rx="1" fill="#dfe6f4"/>
    <path d="M52 140.5 H156" stroke="#fff" stroke-width="1"/>
    <rect x="133.6" y="132.8" width="4" height="16.4" rx="2" fill="#f6f6f6" stroke="#8a8a8a" stroke-width=".7"/>
    <path d="M135.6 134.5 V147.5" stroke="#d4d4d4" stroke-width=".9"/>
    <!-- scale bar -->
    <path d="M54.5 162.5 H153.5 M54.5 157 V168 M153.5 157 V168 M78.5 160 V165 M103.5 160 V165 M128.5 160 V165" stroke="#fff" stroke-width="1" fill="none"/>
    <!-- ways -->
    <path d="M213 334.5 H584" stroke="#f5b83a" stroke-width="3"/>
    <path d="M394 191 L396 333" stroke="#c8c8c8" stroke-width="2"/>
    <path d="M394.6 200 L395.6 320" stroke="#e8e8e8" stroke-width=".8"/>
    <path d="M396 336 L399 486" stroke="#e02828" stroke-width="2"/>
    <path d="M393.8 476 L399 485.3 L403.2 476" stroke="#e02828" stroke-width="1.6" fill="none"/>
    <!-- midpoint crosses -->
    <path d="M300 334.5 H309 M304.5 330 V339" stroke="#f4f020" stroke-width="1"/>
    <path d="M486 334.5 H495 M490.5 330 V339" stroke="#f4f020" stroke-width="1"/>
    <path d="M391 261.5 H400 M395.5 257 V266" stroke="#f4f020" stroke-width="1"/>
    <path d="M393 411.5 H402 M397.5 407 V416" stroke="#f4f020" stroke-width="1"/>
    <!-- nodes -->
    <rect x="211.5" y="332.5" width="3" height="3" fill="#e8a030" stroke="#f0f020" stroke-width="1"/>
    <rect x="582.5" y="332.5" width="3" height="3" fill="#e8a030" stroke="#f0f020" stroke-width="1"/>
    <rect x="392.5" y="187.5" width="3" height="3" fill="#101030" stroke="#f4f020" stroke-width="1"/>
    <rect x="397.5" y="486.5" width="3" height="3" fill="#c02020" stroke="#f4f020" stroke-width="1"/>
    <rect x="393.5" y="331.5" width="5" height="5" fill="none" stroke="#f4f020" stroke-width="1"/>
    <path d="M394.8 335.8 L396.3 332.5 L397.8 335.8 Z" fill="#e02828"/>
    <!-- status icons -->
    <circle cx="22.2" cy="588.8" r="7.9" fill="none" stroke="#1a1a1a" stroke-width="1.2"/>
    <path d="M13.3 588.8 H31" stroke="#e02020" stroke-width="2.2"/>
    <circle cx="116.2" cy="588.8" r="7.9" fill="none" stroke="#1a1a1a" stroke-width="1.2"/>
    <path d="M116.2 580 V597.6" stroke="#e02020" stroke-width="2.2"/>
    <circle cx="210" cy="589" r="7.9" fill="none" stroke="#1a1a1a" stroke-width="1.2"/>
    <path d="M210 589 L217.5 581.5" stroke="#e02020" stroke-width="2.2"/>
    <path d="M265.5 594 L276 583.5" stroke="#000" stroke-width="1.5"/>
    <path d="M265 594.2 H283.3" stroke="#000" stroke-width="2"/>
    <path d="M276.5 584 L282.5 593" stroke="#000" stroke-width="1" stroke-dasharray="1 1"/>
    <rect x="329.7" y="588.5" width="16.8" height="5.7" fill="none" stroke="#000" stroke-width="1.2"/>
    <path d="M332.3 589 V591 M334.6 589 V591.5 M336.9 589 V591 M339.2 589 V591.5 M341.5 589 V591 M343.8 589 V591.5" stroke="#000" stroke-width=".9"/>
    <!-- way select icon -->
    <path d="M418.5 589.5 L430 581" stroke="#e02020" stroke-width="1.5" fill="none"/>
    <path d="M430 581 L435 582.5 M418.5 589.5 L420.5 596 L427 597.5" stroke="#101010" stroke-width="1" fill="none"/>
    <rect x="417.5" y="588.5" width="2" height="2" fill="#202020"/><rect x="429" y="580" width="2" height="2" fill="#202020"/><rect x="419.5" y="595.5" width="2" height="2" fill="#202020"/>
    <path d="M426.5 584.5 V596 L429 593.5 L431 597.5 L432.8 596.8 L430.8 592.8 H434 Z" fill="#fff" stroke="#000" stroke-width="1"/>
  </svg>
  <div class="t" style="left:53.5px;top:168.5px;font-size:10.5px;color:#fff">0</div>
  <div class="t" style="left:137.5px;top:168.5px;font-size:10.5px;color:#fff">15.8 m</div>
</div>
</body></html>
